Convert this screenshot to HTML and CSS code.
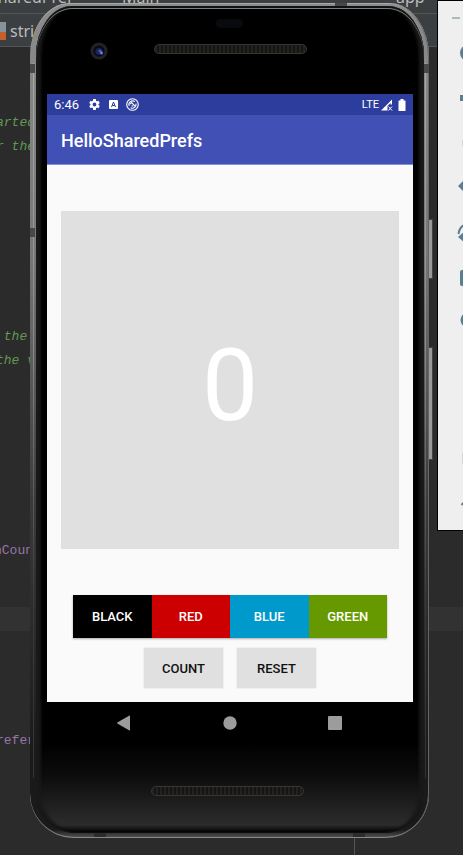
FILE: index.html
```html
<!DOCTYPE html>
<html lang="en">
<head>
<meta charset="utf-8">
<meta name="viewport" content="width=device-width, initial-scale=1">
<title>HelloSharedPrefs</title>
<link rel="stylesheet" href="styles.css">
</head>
<body>
<div class="desktop">
  <div class="editor">
    <div class="crumbs"><span>SharedPref</span><span class="crumb-java">Main</span><span class="crumb-app">app</span></div>
    <div class="tabs"><i class="file-icon"></i><span>stri</span></div>
    <pre class="code code-a"><i>arted</i>
<i>r the</i></pre>
    <pre class="code code-b"><i> the</i>
<i>the v</i></pre>
    <pre class="code code-c">nCoun</pre>
    <div class="current-line"></div>
    <pre class="code code-d">refer</pre>
    <div class="split"></div>
  </div>

  <main class="phone">
    <i class="key key-power"></i>
    <i class="key key-volume"></i>
    <div class="frame">
      <i class="band band-left"></i>
      <i class="band band-right"></i>
      <i class="seam seam-top"></i>
      <i class="seam seam-left"></i>
      <i class="seam seam-left seam-mid"></i>
      <i class="seam seam-right"></i>
      <i class="seam seam-bottom"></i>
      <i class="seam seam-bottom seam-bottom-right"></i>
      <div class="glass">
        <div class="forehead">
          <i class="sensor"></i>
          <svg class="camera" viewBox="0 0 18 18" aria-hidden="true"><circle cx="9" cy="9" r="8.6" fill="#242122"/><circle cx="9" cy="9" r="5.5" fill="#080a18"/><circle cx="9" cy="9.5" r="3.6" fill="#182452"/><circle cx="10" cy="9" r="1.6" fill="#465da5"/><circle cx="11.5" cy="11" r="1.4" fill="#6685e8"/></svg>
          <i class="speaker"></i>
        </div>
        <div class="screen">
          <div class="status">
            <span class="clock">6:46</span>
            <svg class="s-icon" viewBox="0 0 24 24" aria-hidden="true"><path fill="#fff" d="M19.4 13a7.500 7.500 0 0 0 0-2l2.300-1.800-2.300-4-2.800 1.100a8 8 0 0 0-1.700-1L14.500 2h-5l-.4 3.300a8 8 0 0 0-1.700 1L4.600 5.200l-2.300 4L4.600 11a7.500 7.500 0 0 0 0 2l-2.300 1.800 2.300 4 2.800-1.100a8 8 0 0 0 1.700 1l.4 3.300h5l.4-3.300a8 8 0 0 0 1.700-1l2.800 1.100 2.300-4zM12 15.500a3.500 3.500 0 1 1 0-7 3.500 3.500 0 0 1 0 7z"/></svg>
            <svg class="s-icon" viewBox="0 0 13 13" aria-hidden="true"><rect x="2" y="2" width="9" height="9" rx="1" fill="#fff"/><path d="M4.500 9 6.500 4l2 5M5.200 7.500h2.600" fill="none" stroke="#2c3d9d" stroke-width="1"/></svg>
            <svg class="s-icon" viewBox="0 0 14 14" aria-hidden="true"><g fill="none" stroke="#fff" stroke-width="1.200"><circle cx="7" cy="7" r="6.200"/><path d="M3.400 8.500A4 4 0 0 1 9.500 3.900M10.700 6A4 4 0 0 1 5 10.500M4.500 6.500 6 5l4 4"/><path d="M6 8.500h2"/></g></svg>
            <span class="net">LTE</span>
            <svg class="signal" viewBox="0 0 12 12" aria-hidden="true"><path fill="#fff" d="M0 11.500 11 .5v5H9.500V4L6.500 7v4.500z"/><path d="m7.500 7.500 3.500 4m0-4-3.500 4" stroke="#fff"/></svg>
            <svg class="battery" viewBox="0 0 8 12" aria-hidden="true"><path fill="#fff" d="M2.500 0h3v1.500H7q.5 0 .5.500v9.500q0 .5-.5.500H1q-.5 0-.5-.5V2q0-.5.5-.5h1.500z"/></svg>
          </div>
          <header class="appbar"><h1>HelloSharedPrefs</h1></header>
          <section class="content">
            <output class="counter">0</output>
            <div class="colors">
              <button type="button" class="black">BLACK</button>
              <button type="button" class="red">RED</button>
              <button type="button" class="blue">BLUE</button>
              <button type="button" class="green">GREEN</button>
            </div>
            <div class="actions">
              <button type="button">COUNT</button>
              <button type="button">RESET</button>
            </div>
          </section>
        </div>
        <nav class="nav">
          <button type="button" aria-label="Back"><svg viewBox="0 0 16 16"><path fill="#9c9c9c" d="M14 .8v14.400q0 .5-.5.300L1.300 8.500q-.6-.5 0-1L13.500.5q.5-.2.500.3z"/></svg></button>
          <button type="button" aria-label="Home"><svg viewBox="0 0 16 16"><circle cx="8" cy="8" r="6.700" fill="#9c9c9c"/></svg></button>
          <button type="button" aria-label="Overview"><svg viewBox="0 0 16 16"><rect x="1" y="1" width="14" height="14" rx="1" fill="#9c9c9c"/></svg></button>
        </nav>
        <div class="chin"><i class="speaker"></i></div>
      </div>
    </div>
  </main>

  <aside class="tools">
    <svg viewBox="0 0 25 529" aria-hidden="true">
      <path d="M14 17h8" stroke="#a9b9c0" stroke-width="2"/>
      <g fill="#5a7f90">
        <circle cx="30" cy="52" r="8"/>
        <path d="M22 94h5v6h-5zM20 185l8-8v16z"/>
        <rect x="22" y="269" width="10" height="16" rx="2"/>
        <circle cx="30" cy="319" r="7.500"/>
        <path d="m20 236 7-6v12z"/>
      </g>
      <path d="M20.500 233q1-7 6-9" fill="none" stroke="#5a7f90" stroke-width="2"/>
      <path d="M25 139v6M25 411h1M25 452v11" stroke="#cfd8da" stroke-width="2"/>
      <path d="m23.500 504 3-3" stroke="#5a7f90" stroke-width="2"/>
    </svg>
  </aside>
</div>
</body>
</html>
```

FILE: styles.css
```css
* { box-sizing: border-box; }
body { margin: 0; background: #2b2b2b; font-family: Roboto, sans-serif; }
button { margin: 0; padding: 0; border: 0; font: inherit; cursor: pointer; }
.desktop { position: relative; min-height: 100vh; overflow: hidden; padding: 3px 34px 18px 30px; }

/* editor behind the emulator */
.editor { position: absolute; inset: 0; overflow: hidden; color: #bbb; font: 16px/20px "Noto Sans", sans-serif; }
.crumbs { position: relative; height: 14px; background: #3c3f41; border-bottom: 1px solid #555; }
.crumbs span { position: absolute; top: -13px; left: -11px; }
.crumbs .crumb-java { left: 122px; }
.crumbs .crumb-app { left: 396px; }
.tabs { display: flex; align-items: center; gap: 4px; height: 33px; padding-top: 2px; background: #3c3f41; border-bottom: 1px solid #555; }
.file-icon { width: 6px; height: 18px; background: linear-gradient(#87939a 55%, #c75f2c 55%); }
.code { position: absolute; left: -4px; margin: 0; font: 13px/24px "Liberation Mono", monospace; color: #629755; }
.code-a { top: 111px; }
.code-b { top: 325px; }
.code-c { top: 539px; left: -6px; color: #9876aa; }
.code-d { top: 729px; color: #9876aa; }
.current-line { position: absolute; top: 607px; left: 0; right: 0; height: 24px; background: #323232; }
.split { position: absolute; left: 354px; bottom: 0; width: 1px; height: 20px; background: #555; }

/* phone */
.phone { position: relative; }
.frame {
  position: relative;
  padding: 3px 5px 5px 6px;
  border-radius: 40px 40px 44px 44px / 54px 54px 44px 44px;
  background: linear-gradient(#8c8c8c, #777 30%, #3a3a3a 60%, #1a1a1a 90%, #1a1a1a 99%, #555);
  box-shadow: inset -1px 0 #666, inset 0 -1px #888, inset 0 1px #aaa;
}
.glass {
  border-radius: 36px 36px 40px 40px / 50px 50px 40px 40px;
  padding: 0 11px;
  background: linear-gradient(#000 89%, #0c0c0c 93%, #2c2c2c 99%, #000);
  box-shadow: inset 0 2px #111, inset 0 3px #778080, inset 5px 0 3px #191919, inset -5px 0 3px #191919, inset 0 -2px 1px #000;
}
.forehead { position: relative; display: flex; justify-content: center; height: 88px; padding-top: 38px; }
.speaker { width: 153px; height: 10px; border: 1px solid #363636; border-radius: 5px; background: repeating-linear-gradient(90deg, #24221e 0 2px, #161513 2px 4px); }
.sensor { position: absolute; top: 13px; left: calc(50% - 14px); width: 27px; height: 9px; border-radius: 5px; background: #090a0e; }
.camera { position: absolute; top: 36px; left: 43px; width: 18px; height: 18px; }
.key { position: absolute; right: -4px; width: 5px; border: 1px solid #444; background: #999; }
.key-power { top: 216px; height: 60px; }
.key-volume { top: 344px; height: 113px; }
.band, .seam { position: absolute; z-index: 1; background: #484848; }
.band { top: 60px; bottom: 60px; width: 1px; background: linear-gradient(#aaa, #888 40%, #3a3a3a 75%, #333); }
.band-left { left: 3px; }
.band-right { right: 3px; }
.seam-top { top: 0; right: 82px; width: 12px; height: 3px; }
.seam-left { left: 0; top: 61px; width: 5px; height: 9px; }
.seam-mid { top: 225px; }
.seam-right { right: 0; top: 61px; width: 5px; height: 9px; }
.seam-bottom { left: 64px; bottom: 1px; width: 12px; height: 4px; background: #2c2c2c; }
.seam-bottom-right { left: auto; right: 64px; }

/* app */
.screen { display: flex; flex-direction: column; background: #fafafa; }
.status { display: flex; align-items: center; height: 21px; padding: 0 7px; background: #2c3d9d; color: #fff; font-size: 12px; }
.clock { font-size: 13px; margin-right: 3px; }
.s-icon { width: 13px; height: 13px; margin-left: 6px; }
.net { margin-left: auto; font-size: 11px; }
.signal { width: 12px; height: 12px; margin: 0 5px 0 2px; }
.battery { width: 8px; height: 12px; }
.appbar { display: flex; align-items: center; height: 50px; padding: 2px 14px 0; background: #4050b5; border-bottom: 1px solid #8792d0; }
h1 { margin: 0; color: #fff; font-size: 18px; font-weight: 500; }
.content { display: flex; flex-direction: column; align-items: center; padding: 46px 14px 14px; }
.counter { display: flex; align-items: center; justify-content: center; align-self: stretch; height: 338px; padding-top: 12px; background: #e0e0e0; color: #fff; font-size: 100px; line-height: 1; }
.colors { display: grid; grid-template-columns: repeat(4, 1fr); width: 314px; max-width: 100%; height: 43px; margin-top: 46px; box-shadow: 0 1px 2px #aaa; }
.colors button, .actions button { font-size: 13px; font-weight: 500; }
.colors button { color: #fff; }
.black { background: #000; }
.red { background: #c00; }
.blue { background: #09c; }
.green { background: #690; }
.actions { display: flex; gap: 14px; margin-top: 10px; }
.actions button { width: 79px; height: 40px; background: #e0e0e0; color: #111; box-shadow: 0 0 1px #bbb; }
.nav { display: flex; justify-content: space-between; padding: 13px 70px 13px 69px; }
.nav button { display: flex; background: none; }
.nav svg { width: 16px; height: 16px; }
.chin { display: flex; justify-content: center; height: 89px; padding: 42px 6px 0 0; }

/* emulator toolbar */
.tools { position: absolute; top: 0; right: 0; width: 26px; height: 531px; background: #efefef; border: 1px solid #000; border-right: 0; }
.tools svg { display: block; width: 25px; height: 529px; }
```
